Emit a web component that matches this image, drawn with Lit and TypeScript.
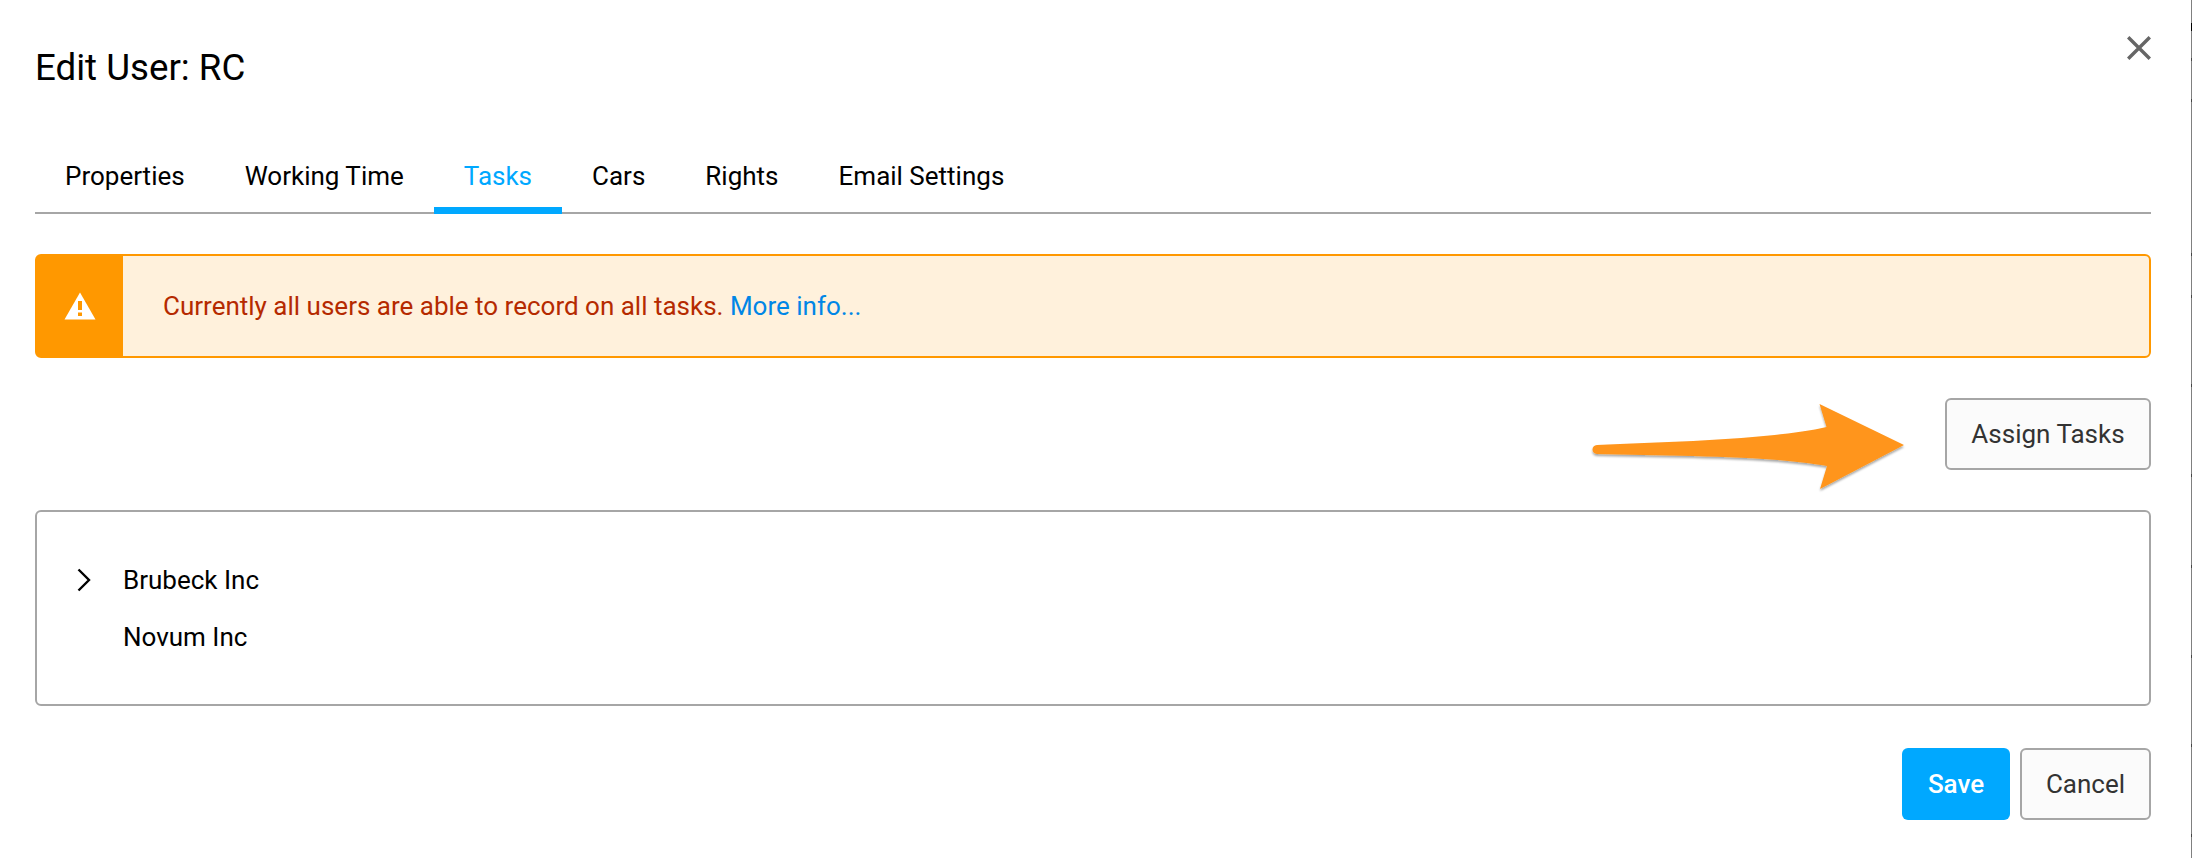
import { LitElement, html, css, svg } from "lit";
import { customElement } from "lit/decorators.js";

const EDGE_TICKS = [58, 99, 253, 295, 384, 474, 565, 655, 744, 834];

@customElement("app-root")
export class AppRoot extends LitElement {
  static styles = css`
    :host {
      display: block;
      width: 2192px;
      height: 858px;
      background: #fff;
      font-family: Roboto, "Liberation Sans", sans-serif;
      color: #000;
      overflow: hidden;
    }
    * { box-sizing: border-box; }
    .dialog {
      position: relative;
      height: 858px;
      padding: 0 40px 0 35px;
      border-right: 1px solid #808080;
    }
    .head {
      height: 134px;
      display: flex;
      align-items: flex-start;
      justify-content: space-between;
    }
    h1 {
      margin: 46px 0 0;
      font-size: 36.7px;
      line-height: 44px;
      font-weight: 400;
    }
    .close { margin-top: 36px; display: block; }
    .tabs {
      display: flex;
      height: 80px;
      border-bottom: 2px solid #a6a6a6;
    }
    .tab {
      height: 80px;
      padding: 0 30px;
      font-size: 26px;
      line-height: 84px;
      white-space: nowrap;
    }
    .tab.active {
      color: #00a8ff;
      border-bottom: 7px solid #00a8ff;
    }
    .alert {
      margin-top: 40px;
      height: 104px;
      display: flex;
      align-items: center;
      background: #fff1dc;
      border: 2px solid #ff9800;
      border-radius: 6px;
      font-size: 26px;
      color: #b52a00;
    }
    .alert-icon {
      width: 86px;
      align-self: stretch;
      background: #ff9800;
      display: flex;
      align-items: center;
      justify-content: center;
      flex: none;
    }
    .alert-text { padding-left: 40px; }
    .alert-text a { color: #0086e6; text-decoration: none; }
    .actions {
      margin-top: 40px;
      display: flex;
      justify-content: flex-end;
    }
    button {
      font-family: inherit;
      font-size: 26px;
      border-radius: 6px;
      padding: 0;
      height: 72px;
    }
    .secondary {
      background: #fbfbfb;
      border: 2px solid #a6a6a6;
      color: #333;
    }
    .assign { width: 206px; }
    .tree {
      margin-top: 40px;
      height: 196px;
      border: 2px solid #a6a6a6;
      border-radius: 6px;
      padding: 54px 40px 0;
      display: flex;
      flex-direction: column;
      gap: 29px;
    }
    .row {
      display: flex;
      align-items: center;
      height: 28px;
      font-size: 26px;
      line-height: 28px;
    }
    .twisty { width: 46px; flex: none; display: flex; align-items: center; }
    .footer {
      margin-top: 42px;
      display: flex;
      justify-content: flex-end;
      gap: 10px;
    }
    .primary {
      width: 108px;
      background: #00a8ff;
      border: 0;
      color: #fff;
      font-weight: 500;
    }
    .cancel { width: 131px; }
    .arrow {
      position: absolute;
      left: 1585px;
      top: 396px;
      overflow: visible;
    }
    .edge-mark {
      position: absolute;
      right: -1px;
      width: 1px;
      height: 3px;
      background: #444;
    }
    .edge-mark.dark {
      height: 8px;
      background: #000;
    }
  `;

  render() {
    return html`
      <div class="dialog">
        <div class="head">
          <h1>Edit User: RC</h1>
          <svg class="close" width="24" height="24" viewBox="0 0 24 24" fill="none" stroke="#666" stroke-width="3.4">
            <path d="M1.2 1.2 22.8 22.8M22.8 1.2 1.2 22.8" />
          </svg>
        </div>
        <div class="tabs">
          ${["Properties", "Working Time", "Tasks", "Cars", "Rights", "Email Settings"].map(
            (t) => html`<div class="tab ${t === "Tasks" ? "active" : ""}">${t}</div>`
          )}
        </div>
        <div class="alert">
          <div class="alert-icon">
            <svg width="32" height="28" viewBox="0 0 32 28">
              <path fill="#fff" d="M16 0.5 31.5 27.5H0.5Z" />
              <path fill="#ff9800" d="M14 9h4v9h-4zM14 20.500h4v3.500h-4z" />
            </svg>
          </div>
          <div class="alert-text">
            Currently all users are able to record on all tasks. <a>More info...</a>
          </div>
        </div>
        <div class="actions">
          <button class="secondary assign">Assign Tasks</button>
        </div>
        <div class="tree">
          <div class="row">
            <span class="twisty">
              <svg width="14" height="24" viewBox="0 0 14 24" fill="none" stroke="#000" stroke-width="2.4">
                <path d="M1.500 1.500 12 12 1.500 22.500" />
              </svg>
            </span>
            Brubeck Inc
          </div>
          <div class="row"><span class="twisty"></span>Novum Inc</div>
        </div>
        <div class="footer">
          <button class="primary">Save</button>
          <button class="secondary cancel">Cancel</button>
        </div>
        <svg class="arrow" width="330" height="100" viewBox="0 0 330 100">
          <defs>
            <filter id="sh" x="-5%" y="-10%" width="110%" height="125%">
              <feDropShadow dx="0" dy="2" stdDeviation="1.200" flood-color="#000" flood-opacity="0.35" />
            </filter>
          </defs>
          ${svg`<path filter="url(#sh)" fill="#ff951b"
            d="M12 49 C90 46 190 43 241.500 31 L234.500 8 L319 49 L235 93 L242 70 C190 60 90 60 12 58 C6 58 6 49 12 49Z" />`}
        </svg>
        <div class="edge-mark dark" style="top:23px"></div>
        ${EDGE_TICKS.map((y) => html`<div class="edge-mark" style="top:${y}px"></div>`)}
      </div>
    `;
  }
}
